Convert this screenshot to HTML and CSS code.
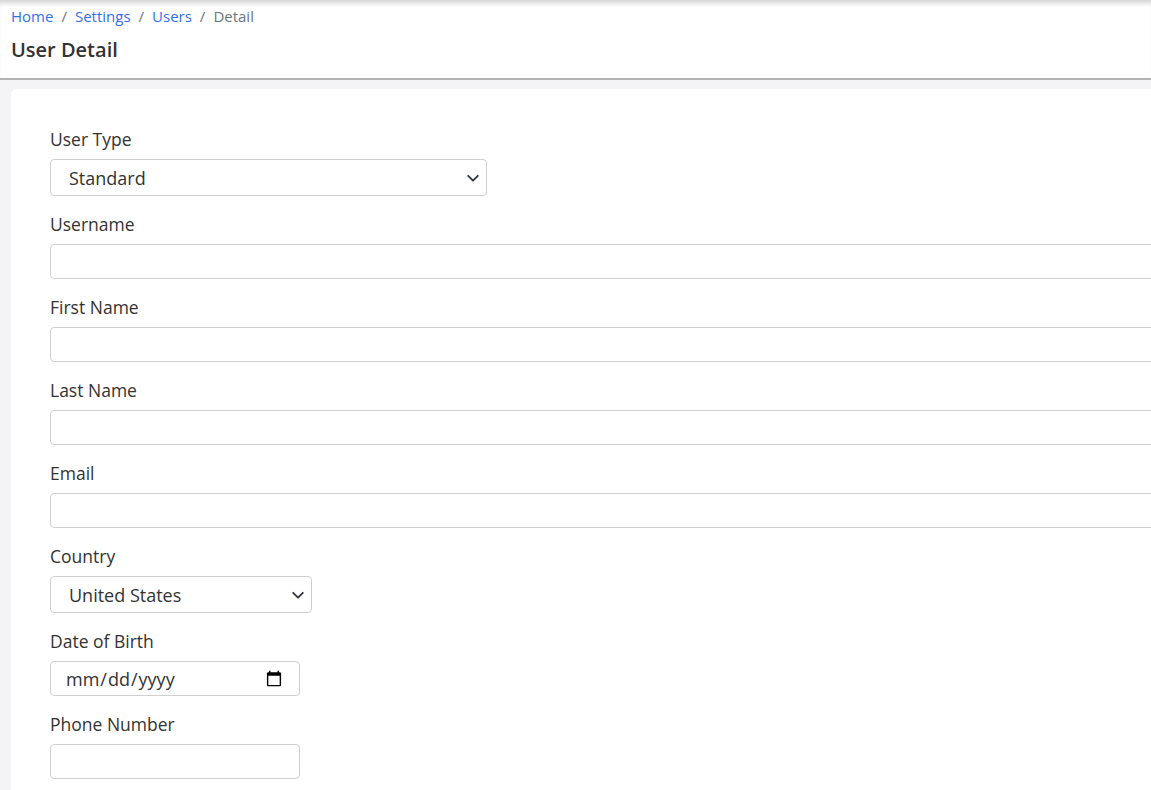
FILE: index.html
```html
<!DOCTYPE html>
<html lang="en">
<head>
<meta charset="utf-8">
<title>User Detail</title>
<link rel="stylesheet" href="styles.css">
</head>
<body>
<header class="page-header">
  <nav class="breadcrumb">
    <a href="#">Home</a><span class="sep">/</span><a href="#">Settings</a><span class="sep">/</span><a href="#">Users</a><span class="sep">/</span><span class="current">Detail</span>
  </nav>
  <h1 class="title">User Detail</h1>
</header>
<main class="main">
  <section class="card">
    <form class="form">
      <div class="field">
        <label class="label">User Type</label>
        <div class="select-wrap w-437">
          <select class="control select"><option>Standard</option></select>
          <svg class="chev" viewBox="0 0 16 16" width="14" height="14"><path d="M2.5 5.5 8 11l5.5-5.5" fill="none" stroke="#343a40" stroke-width="2.2" stroke-linecap="round" stroke-linejoin="round"/></svg>
        </div>
      </div>
      <div class="field">
        <label class="label">Username</label>
        <input class="control input" type="text">
      </div>
      <div class="field">
        <label class="label">First Name</label>
        <input class="control input" type="text">
      </div>
      <div class="field">
        <label class="label">Last Name</label>
        <input class="control input" type="text">
      </div>
      <div class="field">
        <label class="label">Email</label>
        <input class="control input" type="text">
      </div>
      <div class="field">
        <label class="label">Country</label>
        <div class="select-wrap w-262">
          <select class="control select"><option>United States</option></select>
          <svg class="chev" viewBox="0 0 16 16" width="14" height="14"><path d="M2.5 5.5 8 11l5.5-5.5" fill="none" stroke="#343a40" stroke-width="2.2" stroke-linecap="round" stroke-linejoin="round"/></svg>
        </div>
      </div>
      <div class="field">
        <label class="label">Date of Birth</label>
        <input class="control input date w-250" type="date">
      </div>
      <div class="field">
        <label class="label">Phone Number</label>
        <input class="control input w-250" type="text">
      </div>
    </form>
  </section>
</main>
</body>
</html>
```

FILE: styles.css
```css
html, body {
  margin: 0;
  padding: 0;
}
body {
  font-family: "Open Sans", "Noto Sans", "DejaVu Sans", sans-serif;
  background: #f4f4f6;
  color: #333;
  overflow: hidden;
  height: 790px;
}
.page-header {
  background: #fff;
  padding: 6px 11px 0;
  height: 72px;
  border-bottom: 2px solid #b4b4b4;
  box-shadow: inset 0 6px 5px -3px rgba(0,0,0,0.18);
}
.breadcrumb {
  font-size: 15px;
  line-height: 21px;
  color: #6c757d;
}
.breadcrumb a {
  color: #3370ee;
  text-decoration: none;
}
.breadcrumb .sep {
  margin: 0 8px;
  color: #6c757d;
}
.title {
  margin: 9px 0 0;
  font-size: 20px;
  line-height: 28px;
  font-weight: 600;
  color: #333;
}
.main {
  padding: 9px 0 0 11px;
  width: 1250px;
}
.card {
  background: #fff;
  border-radius: 6px 0 0 0;
  padding: 38px 39px 40px;
  height: 800px;
}
.form {
  display: flex;
  flex-direction: column;
  gap: 16px;
}
.field {
  display: flex;
  flex-direction: column;
  align-items: flex-start;
}
.label {
  font-size: 17.5px;
  line-height: 24px;
  margin-bottom: 8px;
  color: #333;
}
.control {
  box-sizing: border-box;
  border: 1px solid #cfcfcf;
  border-radius: 4px;
  background: #fff;
  font-family: "Open Sans", "Noto Sans", sans-serif;
  color: #333;
  margin: 0;
}
.input {
  width: 100%;
  height: 35px;
  padding: 0 14px;
  font-size: 18px;
}
.select-wrap {
  position: relative;
}
.select {
  width: 100%;
  height: 37px;
  padding: 0 30px 0 18px;
  font-size: 18px;
  appearance: none;
  -webkit-appearance: none;
}
.chev {
  position: absolute;
  right: 7px;
  top: 12px;
  pointer-events: none;
}
.w-437 { width: 437px; }
.w-262 { width: 262px; }
.w-250 { width: 250px; }
.date {
  color: #333;
}
.date::-webkit-datetime-edit {
  padding: 0;
}
```
